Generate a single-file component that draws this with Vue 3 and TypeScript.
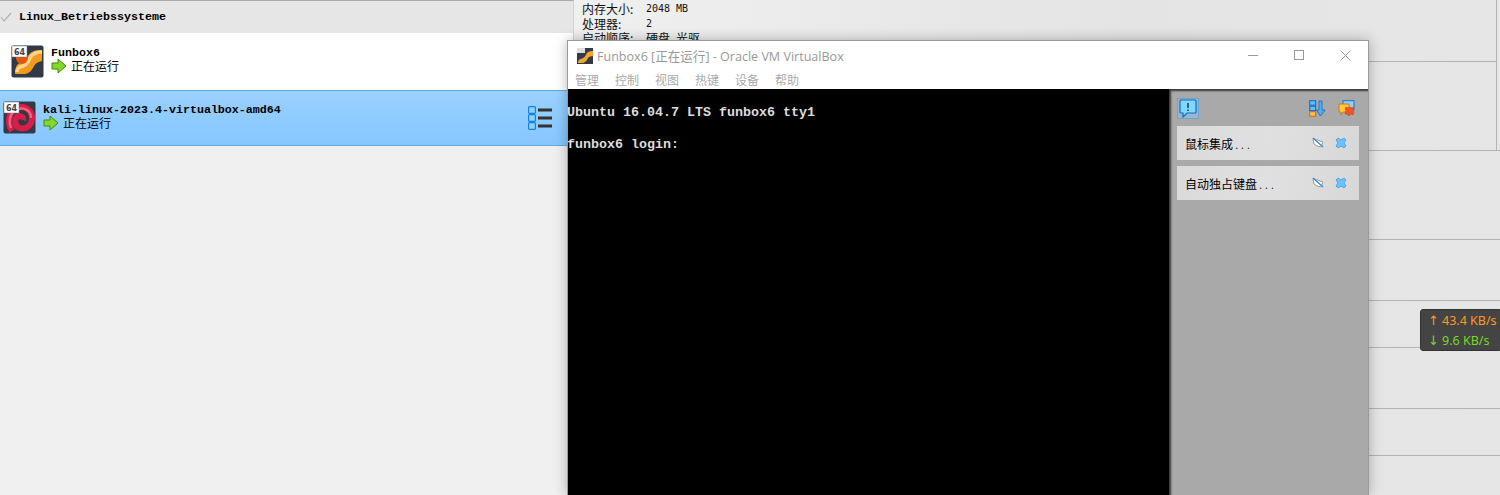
<script setup lang="ts">
const details = [
  { k: '内存大小:', v: '2048 MB' },
  { k: '处理器:', v: '2' },
  { k: '启动顺序:', v: '硬盘, 光驱' },
]
const menus = ['管理', '控制', '视图', '热键', '设备', '帮助']
const notes = ['鼠标集成', '自动独占键盘']
const sections = [89, 61, 47, 61, 47]
</script>

<template>
  <div class="page">
    <div class="left">
      <div class="group"><svg class="check" width="12" height="10" viewBox="0 0 12 10"><path d="M1 5l3 4 7-8" fill="none" stroke="#b5b5b5" stroke-width="1.2"/></svg><span class="vmname">Linux_Betriebssysteme</span></div>
      <div class="vm plain">
        <svg class="vmicon" width="33" height="33" viewBox="0 0 33 33">
          <rect x=".5" y=".5" width="32" height="32" rx="2" fill="#333a45"/>
          <path d="M31 5c-7 0-11 1-14 6-2 4-4 6-8 7-3 1-5 4-5 11h10c5-1 7-4 9-8 2-3 4-4 8-5z" fill="#f29a1f"/>
          <path d="M31 7c-7 0-10 2-12 6-2 5-5 8-10 9-2 1-3 3-3 5" fill="none" stroke="#ffd38a" stroke-width="3.5"/>
          <circle cx="11" cy="13" r="6" fill="#e4570f"/>
          <rect x="1" y="1" width="15" height="11" fill="#fff" stroke="#777" stroke-width=".5"/>
          <text x="8.5" y="9.500" text-anchor="middle" class="b64">64</text>
        </svg>
        <div class="vmtext">
          <span class="vmname">Funbox6</span>
          <div class="state">
            <svg width="16" height="16" viewBox="0 0 16 16"><path d="M1 5h6V1l8 7-8 7v-4H1z" fill="#84d829" stroke="#3d8b0e"/></svg>
            <span>正在运行</span>
          </div>
        </div>
      </div>
      <div class="vm selected">
        <svg class="vmicon" width="33" height="33" viewBox="0 0 33 33">
          <rect x=".5" y=".5" width="32" height="32" rx="2" fill="#333a45"/>
          <path d="M9 30C4 22 5 11 14 7c8-3 15 2 15 10s-7 12-12 10c-5-1-6-8-3-11 3-2 7 0 6 3" fill="none" stroke="#d81e48" stroke-width="6"/>
          <path d="M8 27C5 20 7 11 15 8c7-2 13 2 13 9" fill="none" stroke="#ff5c80" stroke-width="2.500"/>
          <rect x="1" y="1" width="15" height="11" fill="#fff" stroke="#777" stroke-width=".5"/>
          <text x="8.5" y="9.500" text-anchor="middle" class="b64">64</text>
        </svg>
        <div class="vmtext">
          <span class="vmname">kali-linux-2023.4-virtualbox-amd64</span>
          <div class="state">
            <svg width="16" height="16" viewBox="0 0 16 16"><path d="M1 5h6V1l8 7-8 7v-4H1z" fill="#84d829" stroke="#3d8b0e"/></svg>
            <span>正在运行</span>
          </div>
        </div>
        <svg class="tools" width="26" height="25" viewBox="0 0 26 25">
          <g fill="#8ad2ff" stroke="#1a7fdc" stroke-width="1.2">
            <rect x="1.600" y="1.600" width="6.800" height="6.800" rx="1"/>
            <rect x="1.600" y="9.600" width="6.800" height="6.800" rx="1"/>
            <rect x="1.600" y="17.600" width="6.800" height="6.800" rx="1"/>
          </g>
          <g stroke="#333" stroke-width="3">
            <path d="M11 5h14M11 13h14M11 21h14"/>
          </g>
        </svg>
      </div>
    </div>

    <div class="right">
      <div class="upper">
        <div class="info">
          <div class="info-row" v-for="d in details" :key="d.k"><span class="k">{{ d.k }}</span><span class="v">{{ d.v }}</span></div>
        </div>
      </div>
      <div class="sect" v-for="(h, i) in sections" :key="i" :style="{ height: h + 'px' }"></div>
    </div>

    <div class="window">
      <div class="titlebar">
        <svg width="16" height="16" viewBox="0 0 16 16">
          <rect width="16" height="16" fill="#333a45"/>
          <path d="M16 3c-4 0-6 1-7 4-1 2-3 3-5 4-2 0-3 2-3 4h5c3-1 4-3 5-5 1-1 2-2 5-2z" fill="#f6a42c"/>
          <rect x="0" y="0" width="8" height="5" fill="#ddd"/>
        </svg>
        <span class="title">Funbox6 [正在运行] - Oracle VM VirtualBox</span>
        <div class="caps">
          <svg width="11" height="11" viewBox="0 0 11 11"><path d="M0 5.5h10" stroke="#999"/></svg>
          <svg width="11" height="11" viewBox="0 0 11 11"><rect x=".5" y=".5" width="9" height="9" fill="none" stroke="#999"/></svg>
          <svg width="11" height="11" viewBox="0 0 11 11"><path d="M.5.5l10 10M10.500.5l-10 10" stroke="#999"/></svg>
        </div>
      </div>
      <div class="menubar"><span v-for="m in menus" :key="m">{{ m }}</span></div>
      <div class="vmbody">
        <div class="term">
          <div>Ubuntu 16.04.7 LTS funbox6 tty1</div>
          <div class="blank">&nbsp;</div>
          <div>funbox6 login:</div>
        </div>
        <div class="center">
          <div class="center-top">
            <span class="help">
              <svg width="18" height="19" viewBox="0 0 18 19"><path d="M2 1h14a1 1 0 0 1 1 1v11a1 1 0 0 1-1 1H8l-4 4v-4H2a1 1 0 0 1-1-1V2a1 1 0 0 1 1-1z" fill="#7fd8ff" stroke="#0d6fc4" stroke-width="1.2"/><path d="M9 4v5M9 10.500v1.500" stroke="#111" stroke-width="1.200"/></svg>
            </span>
            <span class="spacer"></span>
            <svg width="17" height="17" viewBox="0 0 17 17">
              <rect x=".7" y=".7" width="6" height="4.500" fill="#5ac0ff" stroke="#1565c0"/>
              <rect x=".7" y="6.200" width="6" height="4.500" fill="#5ac0ff" stroke="#1565c0"/>
              <rect x=".7" y="11.700" width="6" height="4.500" fill="#ffc34d" stroke="#d9601a"/>
              <path d="M10 1h3v9h3l-4.500 6L7.500 10H10z" fill="#4db2f5" stroke="#1565c0" stroke-width=".8"/>
            </svg>
            <svg width="17" height="17" viewBox="0 0 17 17">
              <rect x="5" y=".7" width="11" height="9" fill="#8fd0f8" stroke="#1c74c4"/>
              <path d="M1 4h10v8H5l-2 3v-3H1z" fill="#ffc840" stroke="#d07a10"/>
              <path d="M8 7l2 1 2-1 2 1 2-1-1 3 1 2-1 3-2-1-2 2-2-2-2 0 1-3-1-2z" fill="#f0552a" stroke="#c23c14" stroke-width=".5"/>
            </svg>
          </div>
          <div class="note" v-for="n in notes" :key="n">
            <span class="note-text">{{ n }}<span class="dots">...</span></span>
            <svg width="12" height="12" viewBox="0 0 12 12"><path d="M1 1.500l10 3.500-2 5-4-1-3-2z" fill="#fff" stroke="#999"/><path d="M1 1l10 9" stroke="#2a8de0" stroke-width="1.300"/></svg>
            <svg width="12" height="12" viewBox="0 0 12 12"><path d="M1 3l2-2 3 2 3-2 2 2-2 3 2 3-2 2-3-2-3 2-2-2 2-3z" fill="#6cc4fb" stroke="#3d9be0" stroke-width=".8"/></svg>
          </div>
        </div>
      </div>
    </div>

    <div class="speed">
      <div class="up"><i>↑</i><span>43.4 KB/s</span></div>
      <div class="down"><i>↓</i><span>9.6 KB/s</span></div>
    </div>
  </div>
</template>

<style>
html, body { margin: 0; background: #f0f0f0; }
</style>

<style scoped>
.page {
  position: relative;
  display: grid;
  grid-template-columns: 574px 1fr;
  height: 495px;
  overflow: hidden;
  font-family: "Noto Sans CJK SC", "Noto Sans", sans-serif;
  font-size: 12px;
  color: #000;
}
.b64 {
  font-family: "DejaVu Sans", sans-serif;
  font-size: 8px;
  font-weight: 700;
  fill: #444;
}
.left {
  display: flex;
  flex-direction: column;
  background: #f0f0f0;
  border-right: 1px solid #d2d2d2;
  border-top: 1px solid #a9a9a9;
  height: 494px;
}
.group {
  display: flex;
  align-items: center;
  gap: 7px;
  height: 32px;
  background: #e6e6e6;
}
.check { flex: none; }
.vmname {
  font-family: "Liberation Mono", monospace;
  font-weight: 700;
  font-size: 11.67px;
  line-height: 14px;
  color: #000;
}
.vm {
  display: flex;
  align-items: center;
  box-sizing: border-box;
}
.plain {
  height: 57px;
  background: #fff;
  padding-left: 11px;
  padding-bottom: 1px;
}
.selected {
  height: 56px;
  background: linear-gradient(#99d1ff, #86c6ff);
  border-top: 1px solid #64a8e6;
  border-bottom: 1px solid #64a8e6;
  padding-left: 3px;
  padding-bottom: 1px;
}
.vmicon { flex: none; }
.vmtext {
  margin-left: 7px;
  display: flex;
  flex-direction: column;
  justify-content: center;
  margin-top: -3px;
}
.state {
  display: flex;
  align-items: center;
  gap: 4px;
  height: 14px;
  margin-top: -1px;
  font-size: 12px;
  line-height: 14px;
}
.tools {
  margin-left: auto;
  margin-right: 20px;
}
.right {
  display: flex;
  flex-direction: column;
  background: linear-gradient(90deg, #f0f0f0, #e4e4e4 60%, #e6e6e6);
}
.upper {
  height: 151px;
  box-sizing: border-box;
  flex: none;
  border-bottom: 1px solid #b4b4b4;
  padding-right: 3px;
  background: linear-gradient(90deg, transparent 922px, #b4b4b4 922px, #b4b4b4 923px, transparent 923px);
}
.info {
  height: 62px;
  box-sizing: border-box;
  padding: 2px 0 0 8px;
  border-bottom: 1px solid #b4b4b4;
}
.info-row {
  display: flex;
  height: 14.500px;
  line-height: 14.500px;
  color: #111;
}
.k { width: 64px; }
.v {
  font-family: "DejaVu Sans Mono", monospace;
  font-size: 10px;
}
.info-row:last-child .v {
  font-family: "Noto Sans CJK SC", sans-serif;
  font-size: 12px;
}
.sect {
  flex: none;
  box-sizing: border-box;
  border-bottom: 1px solid #b4b4b4;
}
.window {
  position: absolute;
  left: 567px;
  top: 40px;
  width: 802px;
  height: 455px;
  box-sizing: border-box;
  border: 1px solid #9a9a9a;
  border-bottom: 0;
  background: #fff;
  box-shadow: 0 0 12px rgba(0, 0, 0, 0.28);
  display: flex;
  flex-direction: column;
}
.titlebar {
  height: 29px;
  display: flex;
  align-items: center;
  padding-left: 9px;
  flex: none;
}
.title {
  margin-left: 4px;
  font-family: "Open Sans", "Noto Sans CJK SC", sans-serif;
  font-size: 12.550px;
  color: #999;
}
.caps {
  margin-left: auto;
  margin-right: 17px;
  display: flex;
  gap: 35px;
}
.menubar {
  height: 19px;
  display: flex;
  gap: 16px;
  padding-left: 7px;
  flex: none;
  font-size: 12px;
  line-height: 19px;
  color: #aaa;
}
.vmbody {
  flex: 1;
  display: flex;
  min-height: 0;
  background: #000;
}
.term {
  width: 602px;
  flex: none;
  padding-top: 16px;
  margin-left: -1px;
  font-family: "Liberation Mono", monospace;
  font-size: 13.330px;
  line-height: 16px;
  color: #ddd;
  white-space: pre;
  font-weight: 700;
}
.blank { height: 16px; }
.center {
  flex: 1;
  background: #a9a9a9;
  box-shadow: inset 3px 3px 2px -1px #3a3a3a;
  padding: 9px 9px 0 8px;
}
.center-top {
  display: flex;
  align-items: center;
  gap: 12px;
  height: 21px;
  margin-bottom: 7px;
  padding-right: 4px;
}
.help {
  display: flex;
  align-items: center;
  justify-content: center;
  width: 22px;
  height: 21px;
  box-sizing: border-box;
  background: #9bb5cc;
  border: 1px solid #6fa3d0;
}
.spacer { flex: 1; }
.note {
  height: 34px;
  display: flex;
  align-items: center;
  gap: 11px;
  padding: 0 12px 0 8px;
  margin-bottom: 6px;
  background: linear-gradient(100deg, #dadada, #e0e0e0 50%, #d8d8d8);
  font-size: 12px;
}
.note-text { flex: 1; }
.dots {
  font-family: "Liberation Sans", sans-serif;
  letter-spacing: 2.500px;
  margin-left: 2px;
  color: #333;
}
.speed {
  position: absolute;
  left: 1420px;
  top: 309px;
  width: 82px;
  height: 42px;
  box-sizing: border-box;
  background: #444;
  border: 1px solid #333;
  border-radius: 3px;
  padding: 1px 0 0 7px;
  font-family: "Noto Sans", sans-serif;
  font-size: 12.500px;
  line-height: 19.500px;
}
.speed i {
  font-family: "DejaVu Sans", sans-serif;
  font-size: 13px;
  font-style: normal;
  display: inline-block;
  width: 14px;
}
.up { color: #ff9a1e; }
.down { color: #74d82a; }
</style>
